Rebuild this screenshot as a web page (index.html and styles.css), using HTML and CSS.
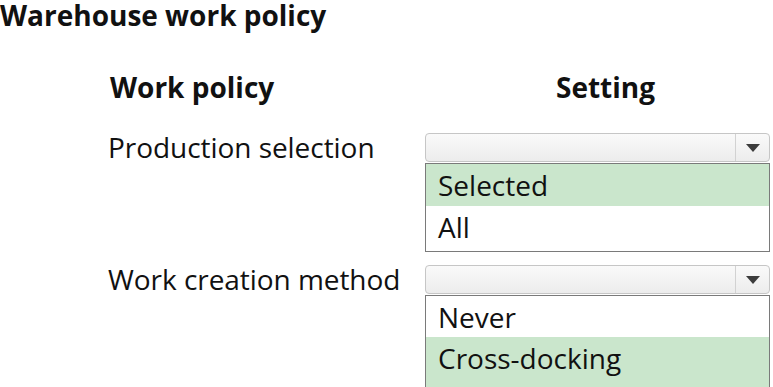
FILE: index.html
```html
<!DOCTYPE html>
<html>
<head>
<meta charset="utf-8">
<link rel="stylesheet" href="styles.css">
</head>
<body>
<div class="page">
  <h1 class="title">Warehouse work policy</h1>
  <div class="grid">
    <div class="head head-policy">Work policy</div>
    <div class="head head-setting">Setting</div>

    <div class="label row-1">Production selection</div>
    <div class="field row-1">
      <div class="combo"><div class="combo-value"></div><div class="combo-btn"><span class="arrow"></span></div></div>
      <ul class="list list-1">
        <li class="opt sel">Selected</li>
        <li class="opt">All</li>
      </ul>
    </div>

    <div class="label row-2">Work creation method</div>
    <div class="field row-2">
      <div class="combo"><div class="combo-value"></div><div class="combo-btn"><span class="arrow"></span></div></div>
      <ul class="list list-2">
        <li class="opt">Never</li>
        <li class="opt sel">Cross-docking</li>
      </ul>
    </div>
  </div>
</div>
</body>
</html>
```
FILE: styles.css
```css
html, body {
  margin: 0;
  padding: 0;
  background: #ffffff;
}
body {
  font-family: "Open Sans", "Noto Sans", sans-serif;
  color: #111;
  width: 773px;
  height: 387px;
  overflow: hidden;
}
.title {
  margin: 0;
  font-size: 28px;
  font-weight: 700;
  line-height: 30px;
  height: 32px;
  padding-top: 0;
}
.grid {
  display: grid;
  grid-template-columns: 317px 345px;
  margin-left: 108px;
  margin-top: 35px;
}
.head {
  font-size: 28px;
  font-weight: 700;
  line-height: 40px;
}
.head-policy {
  padding-left: 2px;
}
.head-setting {
  padding-left: 131px;
}
.label {
  font-size: 28px;
  line-height: 29px;
  letter-spacing: -0.05px;
}
.row-1 {
  margin-top: 26px;
}
.row-2 {
  margin-top: 13px;
}
.field {
  display: flex;
  flex-direction: column;
}
.combo {
  height: 29px;
  box-sizing: border-box;
  border: 1px solid #c6c6c6;
  border-radius: 4px;
  background: linear-gradient(#fafafa, #ececec);
  display: flex;
}
.combo-value {
  flex: 1;
}
.combo-btn {
  width: 33px;
  border-left: 1px solid #d2d2d2;
  display: flex;
  align-items: center;
  justify-content: center;
}
.arrow {
  width: 0;
  height: 0;
  border-left: 7px solid transparent;
  border-right: 7px solid transparent;
  border-top: 8px solid #3c3c3c;
}
.list {
  list-style: none;
  margin: 1px 0 0 0;
  padding: 0;
  border: 1px solid #7a7a7a;
  background: #fff;
}
.opt {
  font-size: 28px;
  line-height: 42px;
  height: 45px;
  padding-left: 12px;
}
.opt.sel {
  background: #cae6cc;
  height: 42px;
}
.list-2 .opt {
  height: 41px;
}
.list-2 .opt.sel {
  height: 50px;
}
```
